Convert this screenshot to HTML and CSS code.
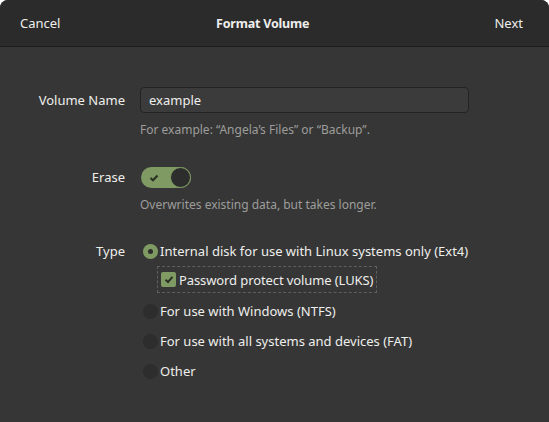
FILE: index.html
```html
<!DOCTYPE html>
<html>
<head>
<meta charset="utf-8">
<link rel="stylesheet" href="styles.css">
</head>
<body>
<div class="window">
  <header class="headerbar">
    <span class="hbtn">Cancel</span>
    <span class="title">Format Volume</span>
    <span class="hbtn next">Next</span>
  </header>
  <main class="content">
    <div class="form">
      <div class="label lbl-name">Volume Name</div>
      <div class="field">
        <div class="entry">example</div>
        <div class="hint">For example: “Angela’s Files” or “Backup”.</div>
      </div>

      <div class="label lbl-erase">Erase</div>
      <div class="field field-erase">
        <div class="switch">
          <svg class="check-small" width="10" height="8" viewBox="0 0 10 8"><path d="M1.5 4 L4 6.3 L8.5 1.5" fill="none" stroke="#2b3324" stroke-width="2.2"/></svg>
          <span class="knob"></span>
        </div>
        <div class="hint hint-erase">Overwrites existing data, but takes longer.</div>
      </div>

      <div class="label lbl-type">Type</div>
      <div class="field options">
        <div class="opt"><span class="radio on"><span class="dot"></span></span>Internal disk for use with Linux systems only (Ext4)</div>
        <div class="luks">
          <div class="focus"><span class="cbox"><svg width="10" height="9" viewBox="0 0 10 9"><path d="M1.5 4.8 L4 7 L8.5 1.8" fill="none" stroke="#2a3123" stroke-width="2"/></svg></span>Password protect volume (LUKS)</div>
        </div>
        <div class="opt"><span class="radio"></span>For use with Windows (NTFS)</div>
        <div class="opt"><span class="radio"></span>For use with all systems and devices (FAT)</div>
        <div class="opt"><span class="radio"></span>Other</div>
      </div>
    </div>
  </main>
</div>
</body>
</html>
```

FILE: styles.css
```css
* { box-sizing: border-box; }
html, body { margin: 0; padding: 0; background: #ffffff; }
body {
  font-family: "Noto Sans", "Open Sans", sans-serif;
  font-size: 13px;
  color: #eeeeec;
}
.window {
  width: 549px;
  height: 422px;
  background: #363636;
  border-radius: 8px 8px 0 0;
  overflow: hidden;
  display: flex;
  flex-direction: column;
}
.headerbar {
  height: 47px;
  background: #2b2b2b;
  border-bottom: 1px solid #1d1d1d;
  display: grid;
  grid-template-columns: 196px auto 1fr;
  align-items: center;
  padding: 0 26px 0 20px;
  flex-shrink: 0;
}
.hbtn { font-size: 13px; color: #eeeeec; }
.next { justify-self: end; }
.title { font-weight: bold; font-size: 12.5px; letter-spacing: -0.2px; }
.content { flex: 1; padding-top: 40px; }
.form {
  display: grid;
  grid-template-columns: 125px 1fr;
  column-gap: 15px;
  align-items: start;
}
.label {
  text-align: right;
  line-height: 26px;
  white-space: nowrap;
}
.field { white-space: nowrap; }
.entry {
  height: 26px;
  width: 329px;
  background: #3b3b3b;
  border: 1px solid #242424;
  border-radius: 4px;
  padding: 0 8px;
  line-height: 24px;
}
.hint {
  font-size: 12px;
  color: #9d9d9b;
  margin-top: 9px;
  line-height: 15px;
}
.lbl-erase { margin-top: 29px; line-height: 21px; padding-top: 1px; }
.field-erase { margin-top: 30px; }
.switch {
  position: relative;
  width: 50px;
  height: 21px;
  margin-left: 1px;
  background: #7f9b63;
  border-radius: 11px;
  display: flex;
  align-items: center;
  padding-left: 8px;
}
.knob {
  position: absolute;
  right: 0;
  top: 0;
  width: 21px;
  height: 21px;
  border-radius: 50%;
  background: #2d2d2d;
  border: 1px solid #7f9b63;
}
.hint-erase { margin-top: 9px; }
.lbl-type { margin-top: 29px; line-height: 20px; }
.options { margin-top: 29px; }
.opt {
  display: flex;
  align-items: center;
  height: 20px;
  margin-bottom: 10px;
}
.radio {
  width: 15px;
  height: 15px;
  border-radius: 50%;
  background: #2d2d2d;
  margin-left: 3px;
  margin-right: 2px;
  display: flex;
  align-items: center;
  justify-content: center;
  flex-shrink: 0;
}
.radio.on { background: #7f9b63; }
.dot { width: 5px; height: 5px; border-radius: 50%; background: #2d2d2d; }
.luks {
  margin-left: 17px;
  margin-top: -5px;
  margin-bottom: 8px;
}
.focus {
  display: inline-flex;
  align-items: center;
  height: 27px;
  border: 1px dashed #5e5e5e;
  padding: 0 3px 0 3px;
  letter-spacing: -0.1px;
}
.cbox {
  width: 15px;
  height: 15px;
  border-radius: 2px;
  background: #7f9b63;
  margin-right: 3px;
  display: flex;
  align-items: center;
  justify-content: center;
}
```
